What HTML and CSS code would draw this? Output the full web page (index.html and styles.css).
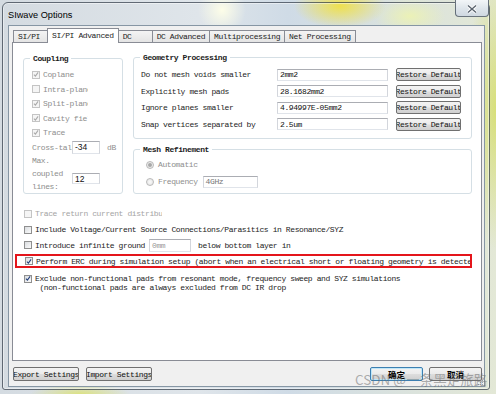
FILE: index.html
```html
<!DOCTYPE html>
<html lang="en">
<head>
    <meta charset="UTF-8">
    <title>SIwave Options</title>
    <link rel="stylesheet" href="styles.css">
</head>
<body>
    <div class="window">
        <div class="titlebar">
            <span class="title">SIwave Options</span>
            <div class="close-btn">
                <svg width="12" height="10" viewBox="0 0 12 10">
                    <path d="M2 1.5l8 7M10 1.5l-8 7" stroke="#fff" stroke-width="3" fill="none"/>
                    <path d="M2 1.5l8 7M10 1.5l-8 7" stroke="#59636e" stroke-width="1.4" fill="none"/>
                </svg>
            </div>
        </div>

        <div class="client">
            <div class="tabs">
                <div class="tab tab-short">SI/PI</div>
                <div class="tab active">SI/PI Advanced</div>
                <div class="tab tab-short">DC</div>
                <div class="tab">DC Advanced</div>
                <div class="tab">Multiprocessing</div>
                <div class="tab">Net Processing</div>
            </div>

            <div class="panel">
                <div class="top">
                    <fieldset class="group coupling">
                        <legend>Coupling</legend>
                        <div class="cb-row muted">
                            <span class="cb cb-off"><svg viewBox="0 0 8 8"><path d="M1.2 4.2l2 2 3.6-5"/></svg></span>
                            <span class="cb-text clip-short">Coplane</span>
                        </div>
                        <div class="cb-row muted">
                            <span class="cb cb-off"></span>
                            <span class="cb-text clip-short">Intra-plane</span>
                        </div>
                        <div class="cb-row muted">
                            <span class="cb cb-off"><svg viewBox="0 0 8 8"><path d="M1.2 4.2l2 2 3.6-5"/></svg></span>
                            <span class="cb-text clip-short">Split-plane</span>
                        </div>
                        <div class="cb-row muted">
                            <span class="cb cb-off"><svg viewBox="0 0 8 8"><path d="M1.2 4.2l2 2 3.6-5"/></svg></span>
                            <span class="cb-text clip-short">Cavity field</span>
                        </div>
                        <div class="cb-row muted">
                            <span class="cb cb-off"><svg viewBox="0 0 8 8"><path d="M1.2 4.2l2 2 3.6-5"/></svg></span>
                            <span class="cb-text clip-short">Trace</span>
                        </div>
                        <div class="crosstalk">
                            <span class="side-label muted">Cross-talk</span>
                            <span class="field field-sans field-small">-34</span>
                            <span class="unit muted">dB</span>
                        </div>
                        <div class="maxlines">
                            <span class="side-label muted">Max.<br>coupled<br>lines:</span>
                            <span class="field field-sans field-small field-low">12</span>
                        </div>
                    </fieldset>

                    <div class="right-col">
                        <fieldset class="group geometry">
                            <legend>Geometry Processing</legend>
                            <div class="geo-row">
                                <span class="geo-label">Do not mesh voids smaller</span>
                                <span class="field geo-field">2mm2</span>
                                <span class="btn btn-restore">Restore Default</span>
                            </div>
                            <div class="geo-row">
                                <span class="geo-label">Explicitly mesh pads</span>
                                <span class="field geo-field">28.1682mm2</span>
                                <span class="btn btn-restore">Restore Default</span>
                            </div>
                            <div class="geo-row">
                                <span class="geo-label">Ignore planes smaller</span>
                                <span class="field geo-field">4.94997E-05mm2</span>
                                <span class="btn btn-restore">Restore Default</span>
                            </div>
                            <div class="geo-row">
                                <span class="geo-label">Snap vertices separated by</span>
                                <span class="field geo-field">2.5um</span>
                                <span class="btn btn-restore">Restore Default</span>
                            </div>
                        </fieldset>

                        <fieldset class="group mesh">
                            <legend>Mesh Refinement</legend>
                            <div class="radio-row muted">
                                <span class="radio radio-on"></span>
                                <span class="radio-text">Automatic</span>
                            </div>
                            <div class="radio-row muted">
                                <span class="radio"></span>
                                <span class="radio-text">Frequency</span>
                                <span class="field freq-field">4GHz</span>
                            </div>
                        </fieldset>
                    </div>
                </div>

                <div class="options">
                    <div class="opt-row faded">
                        <span class="cb cb-off"></span>
                        <span class="cb-text clip-trace">Trace return current distribution</span>
                    </div>
                    <div class="opt-row">
                        <span class="cb"></span>
                        <span class="cb-text">Include Voltage/Current Source Connections/Parasitics in Resonance/SYZ</span>
                    </div>
                    <div class="opt-row">
                        <span class="cb"></span>
                        <span class="cb-text">Introduce infinite ground</span>
                        <span class="field ground-field">0mm</span>
                        <span class="cb-text after-field">below bottom layer in</span>
                    </div>
                    <div class="opt-row highlight">
                        <span class="cb"><svg viewBox="0 0 8 8"><path d="M1.2 4.2l2 2 3.6-5"/></svg></span>
                        <span class="cb-text">Perform ERC during simulation setup (abort when an electrical short or floating geometry is detected)</span>
                    </div>
                    <div class="opt-row opt-multi">
                        <span class="cb"><svg viewBox="0 0 8 8"><path d="M1.2 4.2l2 2 3.6-5"/></svg></span>
                        <span class="cb-text multi-text">Exclude non-functional pads from resonant mode, frequency sweep and SYZ simulations<br> (non-functional pads are always excluded from DC IR drop</span>
                    </div>
                </div>
            </div>

            <div class="footer">
                <span class="btn btn-wide">Export Settings</span>
                <span class="btn btn-wide btn-gap">Import Settings</span>
                <span class="btn btn-cn btn-default">确定</span>
                <span class="btn btn-cn btn-cancel">取消</span>
            </div>

            <svg class="grip" width="7" height="7" viewBox="0 0 7 7">
                <rect x="5" y="1" width="1" height="1" fill="#9aa3ab"/>
                <rect x="3" y="3" width="1" height="1" fill="#9aa3ab"/>
                <rect x="5" y="3" width="1" height="1" fill="#9aa3ab"/>
                <rect x="1" y="5" width="1" height="1" fill="#9aa3ab"/>
                <rect x="3" y="5" width="1" height="1" fill="#9aa3ab"/>
                <rect x="5" y="5" width="1" height="1" fill="#9aa3ab"/>
            </svg>
        </div>
    </div>

    <div class="watermark">CSDN @一条黑走旅路</div>
</body>
</html>
```

FILE: styles.css
```css
* { box-sizing: border-box; }
body {
    margin: 0; width: 496px; height: 394px; overflow: hidden; position: relative;
    font-family: "Liberation Mono", "DejaVu Sans Mono", monospace;
    font-size: 8px; letter-spacing: -0.4px; color: #1c1c1c;
    background:
        radial-gradient(circle at 222px 10px, rgba(255,255,232,0.95) 0, rgba(255,255,232,0) 24px),
        radial-gradient(ellipse 46px 22px at 340px 6px, rgba(240,224,70,0.95), rgba(240,224,70,0)),
        radial-gradient(ellipse 36px 18px at 410px 16px, rgba(236,242,180,0.95), rgba(236,242,180,0)),
        radial-gradient(ellipse 30px 140px at 496px 110px, rgba(214,222,110,0.9), rgba(214,222,110,0)),
        radial-gradient(ellipse 50px 10px at 80px 394px, rgba(220,226,120,0.9), rgba(220,226,120,0)),
        linear-gradient(90deg, #d4dbe1 0, #dfe5ea 40%, #cfdbe6 58%, #e3e8d6 100%);
}

.window {
    margin: 2px 0 0 2px; width: 488px; height: 388px;
    border: 1px solid rgba(45,55,68,0.7); border-radius: 6px 6px 3px 3px;
    padding: 0 4px 2px 5px;
    display: flex; flex-direction: column; position: relative;
    box-shadow: inset 0 0 0 1px rgba(255,255,255,0.45);
}
.titlebar { height: 22px; display: flex; align-items: center; }
.title { font-family: "Liberation Sans", Arial, sans-serif; font-size: 9.2px; letter-spacing: 0; color: #000; margin-top: 1px; }
.close-btn {
    position: absolute; top: -3px; right: 0; width: 34px; height: 17px;
    border: 1px solid rgba(60,72,85,0.75); border-top: none; border-radius: 0 0 4px 4px;
    background: linear-gradient(#f3f6f8, #dde4ea 55%, #cfd8e0);
    display: flex; align-items: center; justify-content: center; padding-top: 2px;
}

.client {
    flex: 1; background: #f0f0f0; border: 1px solid #8696a4;
    padding: 2px 2px 0 3px; display: flex; flex-direction: column; position: relative;
}

.tabs { display: flex; height: 14px; align-items: flex-end; padding-left: 1px; }
.tab {
    height: 12px; line-height: 11px; padding: 0 4px; white-space: nowrap;
    border: 1px solid #898c95; border-bottom: none; margin-right: -1px;
    background: linear-gradient(#f4f4f4, #e4e4e4);
}
.tab-short { width: 35px; }
.tab.active {
    height: 15px; line-height: 13px; margin-bottom: -1px; background: #fff;
    position: relative; z-index: 1;
}

.panel { height: 319px; border: 1px solid #898c95; background: #fff; padding: 9.5px 8px 0 10px; }
.top { display: flex; gap: 10px; align-items: flex-start; }

.group { margin: 0; border: 1px solid #d5dfe5; border-radius: 3px; padding: 5px 6px; min-width: 0; }
.group legend { padding: 0 3px; font-weight: bold; line-height: 9px; }

.coupling { width: 100px; margin-top: 1px; padding-bottom: 0; }
.right-col { width: 339px; }
.geometry { padding-bottom: 5.5px; }
.mesh { margin-top: 6px; padding: 2px 6px 3px; }

.muted { color: #8e8e8e; }
.faded { color: #a4a4a4; }

.cb-row { display: flex; align-items: center; height: 14.5px; }
.cb-row .cb { margin-left: 2px; }
.cb {
    width: 8px; height: 8px; flex: none; border: 1px solid #8f8f8f;
    background: linear-gradient(135deg, #d9dcdf, #fbfbfb);
    display: flex; align-items: center; justify-content: center;
}
.cb svg { width: 7px; height: 7px; }
.cb svg path { fill: none; stroke: #233e7a; stroke-width: 1.4; }
.cb-off { border-color: #c4c4c4; background: #f5f5f5; }
.cb-off svg path { stroke: #a9a9a9; }
.cb-text { margin-left: 3px; white-space: nowrap; }
.clip-short { width: 45px; overflow: hidden; }
.clip-trace { width: 127px; overflow: hidden; }

.crosstalk { display: flex; align-items: center; height: 14px; }
.side-label { width: 40px; margin-left: 2px; white-space: nowrap; flex: none; }
.unit { margin-left: 7px; }
.maxlines { display: flex; align-items: flex-start; }
.maxlines .side-label { line-height: 13px; }

.field {
    display: flex; align-items: center; height: 12px; background: #fff;
    border: 1px solid #abadb3; border-color: #abadb3 #d3d6dc #e0e4ea #d3d6dc;
    padding-left: 2px; white-space: nowrap; overflow: hidden; flex: none; color: #111;
}
.field-sans { font-family: "Liberation Sans", Arial, sans-serif; letter-spacing: 0; font-size: 8.5px; }
.field-small { width: 28px; height: 13px; }
.field-low { height: 11px; margin-top: 19px; }

.geo-row { display: flex; align-items: center; height: 16.5px; }
.geo-label { width: 136px; margin-left: 1px; white-space: nowrap; }
.geo-field { width: 111px; }

.btn {
    display: flex; align-items: center; justify-content: center; overflow: hidden; white-space: nowrap;
    height: 14px; border: 1px solid #707070; border-radius: 2px; color: #111;
    background: linear-gradient(#f3f3f3 0, #ebebeb 48%, #dddddd 52%, #cfcfcf 100%);
}
.btn-restore { width: 65px; height: 13px; margin-left: 8px; }

.radio-row { display: flex; align-items: center; height: 17px; }
.radio {
    width: 8px; height: 8px; margin-left: 6px; flex: none; border-radius: 50%;
    border: 1px solid #b9b9b9; background: radial-gradient(circle, #fafafa, #e2e2e2);
    display: flex; align-items: center; justify-content: center;
}
.radio-on::after { content: ""; width: 4px; height: 4px; border-radius: 50%; background: #a8a8a8; }
.radio-text { margin-left: 4px; }
.freq-field { width: 55px; margin-left: 5px; color: #777; }

.options { margin-top: 12px; }
.opt-row { display: flex; align-items: center; height: 15.7px; white-space: nowrap; }
.opt-row > .cb { margin-left: 1px; }
.ground-field { width: 42px; height: 13px; margin-left: 4px; color: #999; }
.after-field { margin-left: 7px; }
.highlight {
    margin: 1px 0 0 -8px; width: 457px; height: 14px; padding-left: 7px;
    border: 2px solid #e4151b; overflow: hidden;
}
.opt-multi { align-items: flex-start; height: auto; margin-top: 6px; }
.opt-multi .cb { margin-top: 0.5px; }
.multi-text { line-height: 9px; white-space: pre; }

.footer { display: flex; margin-top: 6px; padding-left: 1px; }
.btn-wide { width: 66px; }
.btn-gap { margin-left: 7px; }
.btn-cn {
    width: 53px; font-family: "Noto Sans CJK SC", sans-serif; font-size: 8.5px;
    letter-spacing: 0; font-weight: bold; color: #000;
}
.btn-default { margin-left: auto; border-color: #3c7fb1; box-shadow: inset 0 0 0 1px #bfe6f8; }
.btn-cancel { margin-left: 6px; }

.grip { position: absolute; right: 0; bottom: 0; }

.watermark {
    position: absolute; left: 355px; top: 369px;
    font-family: "Noto Sans CJK SC", sans-serif; font-size: 13.5px; letter-spacing: 0;
    color: rgba(110,110,110,0.55); white-space: nowrap;
}
```
